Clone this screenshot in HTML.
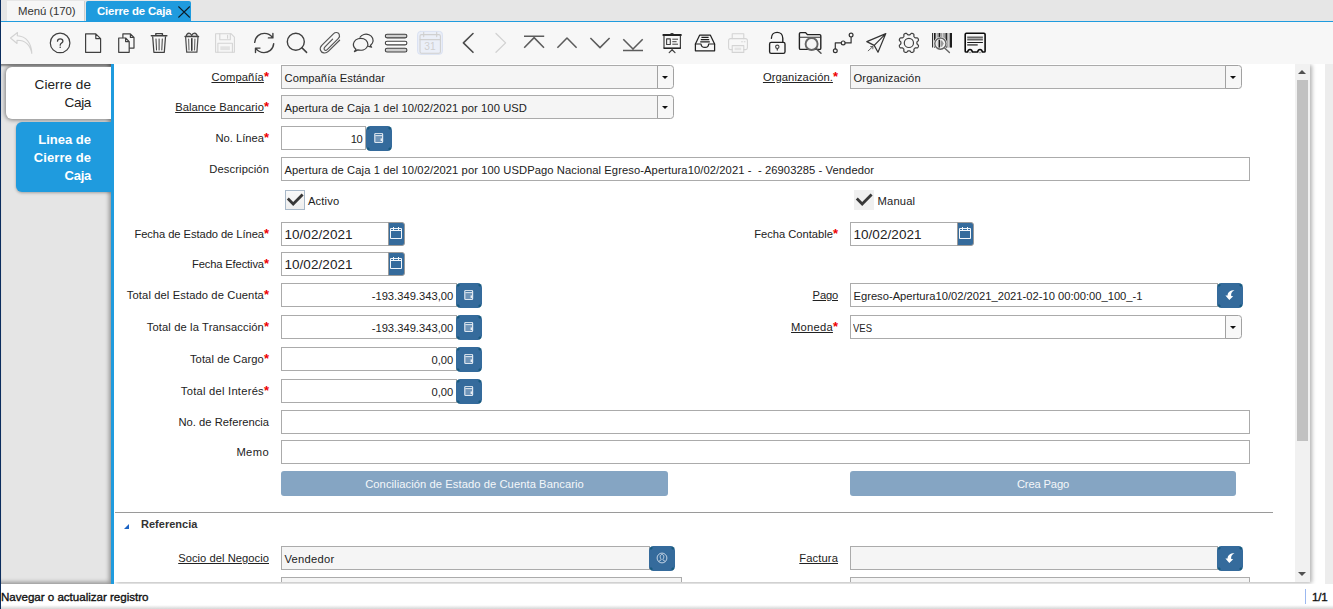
<!DOCTYPE html>
<html>
<head>
<meta charset="utf-8">
<title>Cierre de Caja</title>
<style>
*{box-sizing:border-box;margin:0;padding:0}
html,body{width:1333px;height:609px;overflow:hidden;background:#fff}
body{font-family:"Liberation Sans",sans-serif;font-size:12px;color:#222;position:relative}
.abs{position:absolute}
/* top tab bar */
#tabbar{left:0;top:0;width:1333px;height:22px;background:#e6e6e6}
#leftedge{left:0;top:0;width:1px;height:609px;z-index:5;background:#0b2d5e}
#tab1{left:7px;top:1px;width:78px;height:20px;background:#f6f6f6;border-right:1px solid #cfcfcf;color:#333;font-size:11.4px;line-height:21px;padding-left:11px}
#tab2{left:86px;top:1px;width:105px;height:21px;background:#1f9bde;color:#fff;font-weight:bold;font-size:11.4px;line-height:21px;padding-left:11px;border-radius:2px 2px 0 0}
#tabline{left:1px;top:21px;width:1332px;height:1px;background:#1f9bde}
/* toolbar */
#toolbar{left:1px;top:22px;width:1332px;height:42px;background:#f7f7f7;z-index:2}
.ic{position:absolute;top:31px;width:24px;height:24px}
.ic svg{display:block;width:24px;height:24px;overflow:visible}
/* sidebar */
#sidebar{left:1px;top:64px;width:110px;height:520px;background:#e5e5e5;box-shadow:inset -3px -3px 4px -1px rgba(0,0,0,.35), inset 0 3px 2px -1px rgba(0,0,0,.42)}
#bluebar{z-index:1;left:111px;top:64px;width:3px;height:520px;background:#1f9bde}
#stab1{left:6px;top:67px;width:105px;height:52px;background:#fff;border-radius:6px 0 0 6px;box-shadow:0 0 4px 1px rgba(0,0,0,.45);font-size:13.6px;line-height:18px;text-align:right;padding:9px 20px 0 0;color:#222}
#stab2{left:16px;top:122px;width:95px;height:70px;background:#1f9bde;border-radius:6px 0 0 6px;box-shadow:0 1px 3px rgba(0,0,0,.3);font-size:13px;line-height:18px;text-align:right;padding:9px 20px 0 0;color:#fff;font-weight:bold}
/* content */
#content{left:114px;top:64px;width:1196px;height:518px;background:#fff;overflow:hidden;box-shadow:2px 1px 4px rgba(0,0,0,.3)}
#rightgap{left:1325px;top:64px;width:8px;height:520px;background:#ededed}
#scroll{left:1295px;top:64px;width:15px;height:518px;background:#f1f1f1}
#thumb{left:1297px;top:80px;width:11px;height:361px;background:#c1c1c1}
/* status */
#status{left:0;top:584px;width:1333px;height:25px;background:linear-gradient(#fff 0,#fff 84%,#d6d6d6 100%)}
#stext{left:1px;top:590px;font-size:11.6px;color:#111;-webkit-text-stroke:.35px #111}
#spage{left:1312px;top:590px;font-size:11.6px;color:#111;-webkit-text-stroke:.35px #111}
#ssep{left:1305px;top:589px;width:1px;height:15px;background:#9bb8f0}
/* fields */
.lbl{position:absolute;white-space:nowrap;font-size:11.2px;color:#222;height:16px;line-height:16px;text-align:right}
.lbl u{text-decoration:underline;text-underline-offset:1px}
.lbl b{color:#e00;font-weight:bold;font-size:13px}
.inp{position:absolute;height:24px;border:1px solid #ababab;background:#fff;font-size:11.2px;line-height:24px;padding-left:2.5px;color:#222;white-space:nowrap;overflow:hidden}
.ro{background:#f5f5f5}
.num{text-align:right;padding-right:2.8px}
.date{font-size:13.5px;padding-left:2.4px}
.btn{position:absolute;width:26px;height:25px;border-radius:4.5px;background:radial-gradient(circle at 1.9px 1.9px,#175a80 0,#175a80 1.1px,rgba(23,90,128,0) 2.3px),radial-gradient(circle at 24.1px 1.9px,#175a80 0,#175a80 1.1px,rgba(23,90,128,0) 2.3px),radial-gradient(circle at 1.9px 23.1px,#175a80 0,#175a80 1.1px,rgba(23,90,128,0) 2.3px),radial-gradient(circle at 24.1px 23.1px,#175a80 0,#175a80 1.1px,rgba(23,90,128,0) 2.3px),#356b9c}
.btn svg,.dbtn svg,.chk svg{display:block;position:absolute;left:0;top:0}
.dbtn{position:absolute;width:17px;height:24px;background:#356b9c;border:1px solid #9a9a9a;border-radius:0 3px 3px 0}
.dbtn svg{left:-1px;top:-1px}
.combo{position:absolute;width:17px;height:24px;border:1px solid #a2a2a2;border-radius:0 3.5px 3.5px 0;background:#f8f8f8}
.combo.ro{background:#f7f7f7}
.combo:after{content:"";position:absolute;left:4px;top:9.8px;border:3.6px solid transparent;border-top:3.7px solid #111;border-bottom:0}
.big{position:absolute;height:25px;background:#85a5c3;border-radius:3px;color:#f4f7fa;font-size:11.2px;line-height:27px;text-align:center}
.grp{font-weight:bold;font-size:11px;color:#333;line-height:16px}
.chk{position:absolute;width:20px;height:20px;border:1px solid #a9b9c9;background:linear-gradient(#f9f9f9,#eee)}
.chk svg{left:-1px;top:-1px}
.chk.nb{border:0;background:#f0f0f0}
.chk.nb svg{left:0;top:0}
</style>
</head>
<body>
<div id="tabbar" class="abs"></div>
<div id="tab1" class="abs"><span id="tab1t" style="letter-spacing:-0.085px">Menú (170)</span></div>
<div id="tab2" class="abs"><span id="tab2t" style="letter-spacing:-0.158px">Cierre de Caja</span></div>
<div id="tabline" class="abs"></div>
<svg class="abs" style="left:176px;top:4px" width="16" height="16"><path d="M2.4 2.5 L13.8 13.5 M13.8 2.5 L2.4 13.5" stroke="#0c1c28" stroke-width="1.05" fill="none"/></svg>
<div id="toolbar" class="abs"></div>
<!--ICONS-->
<svg class="abs" style="left:0;top:23px;z-index:3" width="1333" height="41" viewBox="0 23 1333 41" fill="none" stroke="#404040" stroke-width="1.2" stroke-linecap="round" stroke-linejoin="round">
<!-- 1 undo (disabled) -->
<path d="M17.5 32.5 L10.5 38 L17 43.5 L17 40.3 C24 40.2 30 44 31.8 53.5 C31.5 43 26 36.2 17.3 35.8 Z" stroke="#d2d2d2" stroke-width="1.1"/>
<!-- 2 help -->
<circle cx="60.1" cy="42.9" r="9.8"/>
<path d="M57.5 41.2 C57.5 38.2 62.9 38.2 62.9 41.2 C62.9 43 60.2 43.2 60.2 45.2" stroke-width="1.3"/><circle cx="60.2" cy="47.3" r=".8" fill="#404040" stroke="none"/>
<!-- 3 new -->
<path d="M85.6 33.8 H95.8 L100.6 38.6 V52.3 H85.6 Z M95.8 33.8 V38.6 H100.6"/>
<!-- 4 copy -->
<path d="M118.7 38 H125.6 L129.2 41.6 V52.3 H118.7 Z M125.6 38 V41.6 H129.2"/>
<path d="M122.9 37.6 V33.8 H130.4 L134 37.4 V48.1 H129.6 M130.4 33.8 V37.4 H134"/>
<!-- 5 delete -->
<path d="M151.3 35.7 H166.9 M155.8 35.4 V33.6 H162.4 V35.4" stroke-width="1.4"/>
<path d="M152.7 36.8 L153.9 52.3 H164.3 L165.5 36.8" stroke-width="1.25"/>
<path d="M156 39 L156.5 50 M159.1 39 V50 M162.3 39 L161.8 50" stroke-width="1"/>
<!-- 6 delete selection -->
<path d="M186.2 36.2 C186.6 34.2 187.8 33.1 189 33.1 C190.4 33.1 191.2 34.4 191.7 35.5 C192.2 34.2 193.2 33.1 194.5 33.1 C195.7 33.1 196.9 34.2 197.3 36.2" fill="#dcdcdc" stroke="#444" stroke-width="1.2"/>
<path d="M185 36.5 H198.6" stroke="#444" stroke-width="1.3"/>
<path d="M185.6 36.8 L186.7 52.2 H196.9 L198 36.8" stroke="#505050" stroke-width="1.25"/>
<path d="M188.6 39 L189 50 M194.9 39 L194.5 50" stroke="#666" stroke-width="1.1"/><path d="M191.8 38.6 V50.2" stroke-width="1.45" stroke="#2a2a2a"/>
<!-- 7 save (disabled) -->
<g stroke="#d4d4d4" stroke-width="1.1">
<path d="M215.6 33.7 H231 L234.4 37.1 V52.2 H215.6 Z"/>
<path d="M219.8 33.7 V39.8 H230.3 V33.7 M227.6 35.2 V38.2"/>
<path d="M217.9 52.2 V43.2 H232.4 V52.2"/>
<rect x="220.3" y="46.3" width="9.6" height="3.8" fill="#e2e2e2" stroke="none"/>
</g>
<!-- 8 refresh -->
<path d="M254.7 42.4 C255.2 36.4 260 33.4 264.4 33.4 C268.2 33.4 270.8 35.2 272.6 37.6 M272.9 33.4 V37.9 H268.4" stroke-width="1.4"/>
<path d="M273.7 43.6 C273.2 49.6 268.4 52.6 264 52.6 C260.2 52.6 257.6 50.8 255.8 48.4 M255.5 52.6 V48.1 H260" stroke-width="1.4"/>
<!-- 9 search -->
<circle cx="295.8" cy="41.7" r="8.5" stroke-width="1.4"/><path d="M302 47.9 L306.6 52.4" stroke-width="1.5"/>
<!-- 10 attachment -->
<path d="M339.6 40.2 L328.3 51.4 C325.6 54 321.6 53.2 320.5 50.2 C319.8 48.2 320.6 46.6 322 45.2 L333.4 33.8 C335.4 31.8 338.2 32.2 339.2 34.2 C340 36 339.4 37.4 338.2 38.6 L327.2 49.6 C326 50.8 324.6 50.4 324.2 49.4 C323.8 48.4 324.2 47.6 325 46.8 L332.6 39.2" stroke="#555" stroke-width="1.2"/>
<!-- 11 chat -->
<path d="M360 37.2 C361.6 34.6 365.6 33.4 369 34.8 C372.6 36.2 374 40 372.4 43 C371.8 44 371 44.8 370.4 45.2 L371.6 47.2 L368.6 46.4" stroke-width="1.2"/>
<path d="M356 49.2 C353.6 47.4 352.8 44.4 354.2 41.8 C355.8 38.8 360 37.6 363.6 38.8 C367.4 40.2 368.8 43.8 367.2 46.8 C365.6 49.8 361.4 50.8 357.8 49.9 L354.4 51.6 Z" stroke-width="1.2"/>
<!-- 12 grid toggle -->
<rect x="385.3" y="34.2" width="21.6" height="3.7" rx="1.8" fill="#cfcfcf" stroke-width="1.1"/>
<rect x="385.3" y="41.2" width="21.6" height="3.7" rx="1.8" fill="#fff" stroke-width="1.1"/>
<rect x="385.3" y="48.3" width="21.6" height="3.7" rx="1.8" fill="#cfcfcf" stroke-width="1.1"/>
<!-- 13 calendar (disabled, highlighted) -->
<rect x="417.6" y="31.4" width="24.8" height="22.9" rx="3" fill="#ebeff8" stroke="#d9e1f2" stroke-width="1"/>
<g stroke="#d0d0d0" stroke-width="1.1"><rect x="420" y="34.6" width="20.4" height="18.6" rx="1.5"/><path d="M420 39.6 H440.4 M423.7 32.2 V36.6 M436.7 32.2 V36.6"/></g>
<text x="429.9" y="50.4" font-family="Liberation Sans, sans-serif" font-size="10.2" text-anchor="middle" fill="#d0d0d0" stroke="none">31</text>
<!-- 14 prev / 15 next -->
<path d="M473 33.5 L463.4 42.9 L473 52.3" stroke-width="1.6" stroke="#4c4c4c"/>
<path d="M496 33.5 L505.6 42.9 L496 52.3" stroke-width="1.3" stroke="#d2d2d2"/>
<!-- 16 first 17 up 18 down 19 last -->
<g stroke="#5c5c5c" stroke-width="1.55" stroke-linecap="butt">
<path d="M524 36.3 H544.2 M524.2 47.8 L534.1 37.6 L544 47.8"/>
<path d="M557.4 47.8 L567 38 L576.6 47.8"/>
<path d="M590.4 38 L600 47.6 L609.6 38"/>
<path d="M623.3 39.3 L633 49 L642.7 39.3 M623 50.4 H643"/>
</g>
<!-- 20 report -->
<path d="M662.6 35 H681.6" stroke-width="2" stroke-linecap="butt" stroke="#222"/><path d="M671 33.6 H673" stroke-width="1.2"/>
<path d="M664 36 V48 M680.4 36 V48" stroke-width="1.2"/><path d="M663.6 48.2 H680.8" stroke-width="1.6" stroke-linecap="butt" stroke="#222"/>
<rect x="666.6" y="38.9" width="3.7" height="5.6" stroke-width="1.1"/><path d="M672.3 39.2 H678 M672.3 41.7 H676.6 M672.3 44.2 H678" stroke-width="1" stroke-linecap="butt"/>
<path d="M672.1 48.6 V50 M669.2 52.6 L672.1 49.8 L675 52.6" stroke-width="1.2"/>
<!-- 21 archive -->
<path d="M695.4 44 L699.6 35.2 H710.4 L714.6 44 V50.8 H695.4 Z" stroke="#222" stroke-width="1.25"/>
<path d="M695.4 44 H701 C701.4 48.6 708.6 48.6 708.6 44 H714.6" stroke="#222" stroke-width="1.2"/>
<path d="M701.4 37.4 H708.6 M700.8 39.6 H709.2 M700.2 41.8 H709.8" stroke="#222" stroke-width="1.25" stroke-linecap="butt"/>
<!-- 22 print (disabled) -->
<g stroke="#d4d4d4" stroke-width="1.1"><path d="M732.2 38.6 V33.7 H743.8 V38.6"/><path d="M732.2 49.6 H730.4 C729.2 49.6 728.6 48.8 728.6 47.8 V40.6 C728.6 39.4 729.4 38.6 730.6 38.6 H745.4 C746.6 38.6 747.4 39.4 747.4 40.6 V47.8 C747.4 48.8 746.8 49.6 745.6 49.6 H743.8"/><rect x="732.2" y="45.6" width="11.6" height="6.8"/><path d="M741.6 41.8 H742.4 M744.2 41.8 H745"/><rect x="734.6" y="47.6" width="6.6" height="2.6" fill="#e4e4e4" stroke="none"/></g>
<!-- 23 lock -->
<rect x="769.6" y="42.3" width="15.4" height="11" rx="1.6" stroke="#222" stroke-width="1.35"/>
<path d="M771.4 38.2 C771.4 30.4 782.8 30.4 782.8 38.2 V42" stroke="#222" stroke-width="1.35"/>
<circle cx="777.3" cy="46.8" r="1.7" stroke="#444" stroke-width="1.1"/><path d="M777.3 48.6 V50" stroke="#444" stroke-width="1.3"/>
<!-- 24 zoom across -->
<path d="M820.8 48.2 C820.8 49 820.4 49.4 819.6 49.4 H800.6 C799.8 49.4 799.4 49 799.4 48.2 V33.8 C799.4 33 799.8 32.6 800.6 32.6 H805.6 L807.4 34.6 H819.6 C820.4 34.6 820.8 35 820.8 35.8 V48" stroke="#222" stroke-width="1.4"/><path d="M799.6 37.2 H820.6" stroke="#333" stroke-width="1.1"/>
<circle cx="811.6" cy="44" r="6" stroke="#666" stroke-width="1.9" fill="#f6f6f6"/><path d="M816.2 48.6 L821 53.3" stroke="#555" stroke-width="1.5"/>
<!-- 25 workflow -->
<g stroke="#333" stroke-width="1.2"><circle cx="835.3" cy="50.8" r="1.9"/><circle cx="843.2" cy="42.9" r="1.9"/><circle cx="851.1" cy="35.1" r="1.9"/><path d="M835.3 48.8 V42.9 H841.2 M845.2 42.9 H851.1 V37.1"/></g>
<!-- 26 request -->
<path d="M885.8 33.6 L866.8 41.6 L874.2 45.4 L878 52.2 Z M874.2 45.4 L885.8 33.6" stroke-width="1.2" stroke="#333"/>
<path d="M868.2 50.8 L873 46.4 M870.6 46.6 L873 46.4 L872.8 48.8" stroke-width=".9" stroke="#555"/>
<!-- 27 gear -->
<circle cx="908.9" cy="42.9" r="4.6" stroke-width="1.2"/>
<path d="M908.90 34.90 L909.11 34.90 L909.32 34.90 L909.53 34.88 L909.75 34.84 L909.97 34.75 L910.22 34.55 L910.51 34.22 L910.83 33.83 L911.15 33.52 L911.46 33.36 L911.74 33.31 L912.01 33.34 L912.27 33.39 L912.52 33.47 L912.77 33.57 L913.01 33.68 L913.24 33.80 L913.47 33.94 L913.67 34.11 L913.84 34.34 L913.94 34.67 L913.95 35.12 L913.90 35.63 L913.87 36.06 L913.90 36.38 L914.00 36.60 L914.12 36.78 L914.26 36.94 L914.41 37.09 L914.56 37.24 L914.71 37.39 L914.86 37.54 L915.02 37.68 L915.20 37.80 L915.42 37.90 L915.74 37.93 L916.17 37.90 L916.68 37.85 L917.13 37.86 L917.46 37.96 L917.69 38.13 L917.86 38.33 L918.00 38.56 L918.12 38.79 L918.23 39.03 L918.33 39.28 L918.41 39.53 L918.46 39.79 L918.49 40.06 L918.44 40.34 L918.28 40.65 L917.97 40.97 L917.58 41.29 L917.25 41.58 L917.05 41.83 L916.96 42.05 L916.92 42.27 L916.90 42.48 L916.90 42.69 L916.90 42.90 L916.90 43.11 L916.90 43.32 L916.92 43.53 L916.96 43.75 L917.05 43.97 L917.25 44.22 L917.58 44.51 L917.97 44.83 L918.28 45.15 L918.44 45.46 L918.49 45.74 L918.46 46.01 L918.41 46.27 L918.33 46.52 L918.23 46.77 L918.12 47.01 L918.00 47.24 L917.86 47.47 L917.69 47.67 L917.46 47.84 L917.13 47.94 L916.68 47.95 L916.17 47.90 L915.74 47.87 L915.42 47.90 L915.20 48.00 L915.02 48.12 L914.86 48.26 L914.71 48.41 L914.56 48.56 L914.41 48.71 L914.26 48.86 L914.12 49.02 L914.00 49.20 L913.90 49.42 L913.87 49.74 L913.90 50.17 L913.95 50.68 L913.94 51.13 L913.84 51.46 L913.67 51.69 L913.47 51.86 L913.24 52.00 L913.01 52.12 L912.77 52.23 L912.52 52.33 L912.27 52.41 L912.01 52.46 L911.74 52.49 L911.46 52.44 L911.15 52.28 L910.83 51.97 L910.51 51.58 L910.22 51.25 L909.97 51.05 L909.75 50.96 L909.53 50.92 L909.32 50.90 L909.11 50.90 L908.90 50.90 L908.69 50.90 L908.48 50.90 L908.27 50.92 L908.05 50.96 L907.83 51.05 L907.58 51.25 L907.29 51.58 L906.97 51.97 L906.65 52.28 L906.34 52.44 L906.06 52.49 L905.79 52.46 L905.53 52.41 L905.28 52.33 L905.03 52.23 L904.79 52.12 L904.56 52.00 L904.33 51.86 L904.13 51.69 L903.96 51.46 L903.86 51.13 L903.85 50.68 L903.90 50.17 L903.93 49.74 L903.90 49.42 L903.80 49.20 L903.68 49.02 L903.54 48.86 L903.39 48.71 L903.24 48.56 L903.09 48.41 L902.94 48.26 L902.78 48.12 L902.60 48.00 L902.38 47.90 L902.06 47.87 L901.63 47.90 L901.12 47.95 L900.67 47.94 L900.34 47.84 L900.11 47.67 L899.94 47.47 L899.80 47.24 L899.68 47.01 L899.57 46.77 L899.47 46.52 L899.39 46.27 L899.34 46.01 L899.31 45.74 L899.36 45.46 L899.52 45.15 L899.83 44.83 L900.22 44.51 L900.55 44.22 L900.75 43.97 L900.84 43.75 L900.88 43.53 L900.90 43.32 L900.90 43.11 L900.90 42.90 L900.90 42.69 L900.90 42.48 L900.88 42.27 L900.84 42.05 L900.75 41.83 L900.55 41.58 L900.22 41.29 L899.83 40.97 L899.52 40.65 L899.36 40.34 L899.31 40.06 L899.34 39.79 L899.39 39.53 L899.47 39.28 L899.57 39.03 L899.68 38.79 L899.80 38.56 L899.94 38.33 L900.11 38.13 L900.34 37.96 L900.67 37.86 L901.12 37.85 L901.63 37.90 L902.06 37.93 L902.38 37.90 L902.60 37.80 L902.78 37.68 L902.94 37.54 L903.09 37.39 L903.24 37.24 L903.39 37.09 L903.54 36.94 L903.68 36.78 L903.80 36.60 L903.90 36.38 L903.93 36.06 L903.90 35.63 L903.85 35.12 L903.86 34.67 L903.96 34.34 L904.13 34.11 L904.33 33.94 L904.56 33.80 L904.79 33.68 L905.03 33.57 L905.28 33.47 L905.53 33.39 L905.79 33.34 L906.06 33.31 L906.34 33.36 L906.65 33.52 L906.97 33.83 L907.29 34.22 L907.58 34.55 L907.83 34.75 L908.05 34.84 L908.27 34.88 L908.48 34.90 L908.69 34.90 Z" stroke-width="1.2"/>
<!-- 28 product info -->
<rect x="934" y="33" width="18" height="14.5" fill="#a2a2a2" stroke="none"/>
<g stroke="#1e1e1e" stroke-linecap="butt"><path d="M932.6 33 V47.5" stroke-width="1"/><path d="M934.7 33 V47.5" stroke-width="1.5"/><path d="M939.4 33 V47.5" stroke-width="1.1"/><path d="M946.3 33 V47.5" stroke-width="1.2"/><path d="M951 33 V47.5" stroke-width="2"/></g>
<path d="M936.6 33 V47.5 M942.6 33 V47.5 M948.4 33 V47.5" stroke="#d8d8d8" stroke-width=".9" stroke-linecap="butt"/>
<circle cx="940.4" cy="43.6" r="5.5" fill="#f4f4f4" stroke="#f6f6f6" stroke-width="2.6"/>
<circle cx="940.4" cy="43.6" r="5.6" fill="none" stroke="#626262" stroke-width="1.4"/>
<path d="M939.3 39.6 V47.6" stroke="#222" stroke-width="1.6" stroke-linecap="butt"/><path d="M940.6 40.4 H942 L943.8 43.6 L942 46.8 H940.6 Z" fill="#9a9a9a" stroke="none"/><path d="M937.2 41.2 V46" stroke="#cfcfcf" stroke-width="1" stroke-linecap="butt"/>
<path d="M944.6 47.9 L949.4 52.5" stroke="#666" stroke-width="1.4"/>
<!-- 29 receipt -->
<path d="M965.2 51.2 V34.4 C965.2 33.6 965.6 33.2 966.4 33.2 H983.9 C984.7 33.2 985.1 33.6 985.1 34.4 V51.2 C985.1 51.8 984.7 52 984.2 52 H982.4 C982 50.2 981 49.5 980 49.5 C979 49.5 978 50.2 977.6 52 H972.4 C972 50.2 971 49.5 970 49.5 C969 49.5 968 50.2 967.6 52 H966.1 C965.6 52 965.2 51.8 965.2 51.2 Z" stroke="#0c0c0c" stroke-width="1.6"/>
<circle cx="970" cy="52.6" r=".8" fill="#888" stroke="none"/><circle cx="980" cy="52.6" r=".8" fill="#888" stroke="none"/>
<path d="M967.2 37.4 H982.9 M967.2 39.7 H982.9" stroke="#666" stroke-width="1.8" stroke-linecap="butt"/><path d="M967.2 42.5 H982.9" stroke="#1a1a1a" stroke-width="1" stroke-linecap="butt"/><path d="M967.2 44.9 H977.7" stroke="#4a4a4a" stroke-width="1.5" stroke-linecap="butt"/>
</svg>
<!--/ICONS-->
<div id="sidebar" class="abs"></div>
<div id="bluebar" class="abs"></div>
<div id="stab1" class="abs"><span id="s1a" style="letter-spacing:0.064px">Cierre de</span><br><span id="s1b" style="letter-spacing:-0.392px">Caja</span></div>
<div id="stab2" class="abs"><span id="s2a" style="letter-spacing:-0.006px">Linea de</span><br><span id="s2b" style="letter-spacing:0.092px">Cierre de</span><br><span id="s2c" style="letter-spacing:-0.267px">Caja</span></div>
<div id="rightgap" class="abs"></div>
<div id="content" class="abs"></div>
<svg width="0" height="0" style="position:absolute"><defs>
<symbol id="i-calc" viewBox="0 0 26 25"><rect x="8.8" y="7.5" width="7.8" height="9" rx=".8" fill="#6f94b8" stroke="#dfe7f0" stroke-width="1.2"/><path d="M9.4 9.6 H16" stroke="#dfe7f0" stroke-width="1"/><path d="M9.6 8.4 H15.8" stroke="#3f73a2" stroke-width=".9"/><rect x="14.6" y="12.4" width="1.4" height="2.6" fill="#e8eef4"/></symbol>
<symbol id="i-cal" viewBox="0 0 17 24"><path d="M2.5 6.5 H13.5 V16.5 H2.5 Z M2.5 8.5 H13.5 M5.5 5 V9 M10.5 5 V9" fill="none" stroke="#f2f6fa" stroke-width="1"/></symbol>
<symbol id="i-arr" viewBox="0 0 26 25"><path d="M17.5 7.1 C13 7.3 10.6 9.5 10.6 12.6 L8.4 12.5 L12.3 16.9 L16.2 13.2 L14.2 12.9 C13.8 10.5 15 8.5 17.5 7.1 Z" fill="#fff"/></symbol>
<symbol id="i-bp" viewBox="0 0 26 25"><g fill="none" stroke="#c9d8e8" stroke-width=".95"><circle cx="13" cy="12" r="4.9"/><path d="M11.2 10.6 C11.2 7.8 14.8 7.8 14.8 10.6 C14.8 12.4 13.9 12.8 13.9 13.6 C13.9 14.6 15.6 14.6 16.4 15.6 M12.1 13.6 C12.1 14.6 10.4 14.6 9.6 15.6 M11.2 10.6 C11.2 12.4 12.1 12.8 12.1 13.6"/></g></symbol>
<symbol id="i-chk" viewBox="0 0 20 20"><path d="M2.8 8.6 L8.2 14 L17.6 4.6" fill="none" stroke="#383838" stroke-width="2.8"/></symbol>
</defs></svg>
<!--FIELDS-->
<!-- row 1 -->
<div class="lbl" style="right:1064px;top:69px"><u id="l1" style="letter-spacing:0.109px">Compañía</u><b>*</b></div>
<div class="inp ro" style="left:281px;top:65px;width:377px"><span id="v1" style="letter-spacing:0.058px">Compañía Estándar</span></div><div class="combo ro" style="left:657px;top:65px"></div>
<div class="lbl" style="right:495px;top:69px"><u id="r1" style="letter-spacing:0.075px">Organización.</u><b>*</b></div>
<div class="inp ro" style="left:850px;top:65px;width:376px"><span id="v1r" style="letter-spacing:0.115px">Organización</span></div><div class="combo ro" style="left:1225px;top:65px"></div>
<!-- row 2 -->
<div class="lbl" style="right:1064px;top:99px"><u id="l2" style="letter-spacing:0.069px">Balance Bancario</u><b>*</b></div>
<div class="inp ro" style="left:281px;top:95px;width:377px"><span id="v2" style="letter-spacing:0.082px">Apertura de Caja 1 del 10/02/2021 por 100 USD</span></div><div class="combo ro" style="left:657px;top:95px"></div>
<!-- row 3 -->
<div class="lbl" style="right:1064px;top:130px"><span id="l3" style="letter-spacing:-0.013px">No. Línea</span><b>*</b></div>
<div class="inp num" style="left:281px;top:126px;width:85px"><span id="n3" style="letter-spacing:-0.527px">10</span></div><div class="btn" style="left:366px;top:126px"><svg width="26" height="25"><use href="#i-calc"/></svg></div>
<!-- row 4 -->
<div class="lbl" style="right:1064px;top:161px"><span id="l4" style="letter-spacing:0.113px">Descripción</span></div>
<div class="inp" style="left:281px;top:157px;width:969px"><span id="v4" style="letter-spacing:0.086px">Apertura de Caja 1 del 10/02/2021 por 100 USDPago Nacional Egreso-Apertura10/02/2021 - &nbsp;- 26903285 - Vendedor</span></div>
<!-- row 5 checks -->
<div class="chk" style="left:285px;top:190px"><svg width="20" height="20"><use href="#i-chk"/></svg></div><div class="lbl" style="left:308px;top:193px"><span id="c1" style="letter-spacing:0.139px">Activo</span></div>
<div class="chk nb" style="left:854px;top:190px"><svg width="20" height="20"><use href="#i-chk"/></svg></div><div class="lbl" style="left:877.5px;top:193px"><span id="c2" style="letter-spacing:0.183px">Manual</span></div>
<!-- row 6 -->
<div class="lbl" style="right:1064px;top:226px"><span id="l6" style="letter-spacing:-0.073px">Fecha de Estado de Línea</span><b>*</b></div>
<div class="inp date" style="left:281px;top:222px;width:108px"><span id="d6" style="letter-spacing:0.072px">10/02/2021</span></div><div class="dbtn" style="left:388px;top:222px"><svg width="17" height="24"><use href="#i-cal"/></svg></div>
<div class="lbl" style="right:495px;top:226px"><span id="r6" style="letter-spacing:-0.021px">Fecha Contable</span><b>*</b></div>
<div class="inp date" style="left:850px;top:222px;width:108px"><span id="d6r" style="letter-spacing:0.072px">10/02/2021</span></div><div class="dbtn" style="left:957px;top:222px"><svg width="17" height="24"><use href="#i-cal"/></svg></div>
<!-- row 7 -->
<div class="lbl" style="right:1064px;top:256px"><span id="l7" style="letter-spacing:-0.143px">Fecha Efectiva</span><b>*</b></div>
<div class="inp date" style="left:281px;top:252px;width:108px"><span id="d7" style="letter-spacing:0.072px">10/02/2021</span></div><div class="dbtn" style="left:388px;top:252px"><svg width="17" height="24"><use href="#i-cal"/></svg></div>
<!-- row 8 -->
<div class="lbl" style="right:1064px;top:287px"><span id="l8" style="letter-spacing:0.106px">Total del Estado de Cuenta</span><b>*</b></div>
<div class="inp num" style="left:281px;top:283px;width:176px"><span id="n8" style="letter-spacing:0.0px">-193.349.343,00</span></div><div class="btn" style="left:456px;top:283px"><svg width="26" height="25"><use href="#i-calc"/></svg></div>
<div class="lbl" style="right:495px;top:287px"><u id="r8" style="letter-spacing:-0.185px">Pago</u></div>
<div class="inp" style="left:850px;top:283px;width:368px"><span id="v8r" style="letter-spacing:-0.005px">Egreso-Apertura10/02/2021_2021-02-10 00:00:00_100_-1</span></div><div class="btn" style="left:1217px;top:283px"><svg width="26" height="25"><use href="#i-arr"/></svg></div>
<!-- row 9 -->
<div class="lbl" style="right:1064px;top:319px"><span id="l9" style="letter-spacing:0.12px">Total de la Transacción</span><b>*</b></div>
<div class="inp num" style="left:281px;top:315px;width:176px"><span id="n9" style="letter-spacing:0.0px">-193.349.343,00</span></div><div class="btn" style="left:456px;top:315px"><svg width="26" height="25"><use href="#i-calc"/></svg></div>
<div class="lbl" style="right:495px;top:319px"><u id="r9" style="letter-spacing:0.244px">Moneda</u><b>*</b></div>
<div class="inp" style="left:850px;top:315px;width:376px"><span style="display:inline-block;transform:scaleX(.85);transform-origin:0 50%;margin-left:-1px">VES</span></div><div class="combo" style="left:1225px;top:315px"></div>
<!-- row 10 -->
<div class="lbl" style="right:1064px;top:351px"><span id="l10" style="letter-spacing:0.088px">Total de Cargo</span><b>*</b></div>
<div class="inp num" style="left:281px;top:347px;width:176px"><span id="n10" style="letter-spacing:-0.045px">0,00</span></div><div class="btn" style="left:456px;top:347px"><svg width="26" height="25"><use href="#i-calc"/></svg></div>
<!-- row 11 -->
<div class="lbl" style="right:1064px;top:383px"><span id="l11" style="letter-spacing:0.242px">Total del Interés</span><b>*</b></div>
<div class="inp num" style="left:281px;top:379px;width:176px"><span id="n11" style="letter-spacing:-0.045px">0,00</span></div><div class="btn" style="left:456px;top:379px"><svg width="26" height="25"><use href="#i-calc"/></svg></div>
<!-- row 12 -->
<div class="lbl" style="right:1064px;top:414px"><span id="l12" style="letter-spacing:0.018px">No. de Referencia</span></div>
<div class="inp" style="left:281px;top:410px;width:969px"></div>
<!-- row 13 -->
<div class="lbl" style="right:1064px;top:444px"><span id="l13" style="letter-spacing:0.377px">Memo</span></div>
<div class="inp" style="left:281px;top:440px;width:969px"></div>
<!-- row 14 buttons -->
<div class="big" style="left:281px;top:471px;width:387px"><span id="b1" style="letter-spacing:0.07px">Conciliación de Estado de Cuenta Bancario</span></div>
<div class="big" style="left:850px;top:471px;width:386px"><span id="b2" style="letter-spacing:-0.144px">Crea Pago</span></div>
<!-- group header -->
<div class="abs" style="left:115px;top:512px;width:1158px;height:1px;background:#9a9a9a"></div>
<div class="abs" style="left:124px;top:524px;width:0;height:0;border-left:5px solid transparent;border-bottom:5px solid #1b63c4"></div>
<div class="abs grp" style="left:141px;top:516px"><span id="grp" style="letter-spacing:0.013px">Referencia</span></div>
<!-- row 15 -->
<div class="lbl" style="right:1064px;top:550px"><u id="l15" style="letter-spacing:0.036px">Socio del Negocio</u></div>
<div class="inp ro" style="left:281px;top:546px;width:369px"><span id="v15" style="letter-spacing:0.249px">Vendedor</span></div><div class="btn" style="left:649px;top:546px"><svg width="26" height="25"><use href="#i-bp"/></svg></div>
<div class="lbl" style="right:495px;top:550px"><u id="r15" style="letter-spacing:0.109px">Factura</u></div>
<div class="inp ro" style="left:850px;top:546px;width:368px"></div><div class="btn" style="left:1217px;top:546px"><svg width="26" height="25"><use href="#i-arr"/></svg></div>
<!-- row 16 partial -->
<div class="inp ro" style="left:281px;top:577px;width:401px;height:5px;border-bottom:0"></div>
<div class="inp ro" style="left:850px;top:577px;width:400px;height:5px;border-bottom:0"></div>
<!--/FIELDS-->
<div id="scroll" class="abs"></div>
<div id="thumb" class="abs"></div>
<div class="abs" style="left:1298px;top:70px;width:0;height:0;border:4.5px solid transparent;border-top:0;border-bottom:4.5px solid #505050"></div>
<div class="abs" style="left:1298px;top:572px;width:0;height:0;border:4.5px solid transparent;border-bottom:0;border-top:4.5px solid #505050"></div>
<div id="status" class="abs"></div>
<div id="stext" class="abs"><span id="st" style="letter-spacing:-0.028px">Navegar o actualizar registro</span></div>
<div id="ssep" class="abs"></div>
<div id="spage" class="abs"><span id="sp" style="letter-spacing:-0.242px">1/1</span></div>
<div id="leftedge" class="abs"></div>
</body>
</html>
